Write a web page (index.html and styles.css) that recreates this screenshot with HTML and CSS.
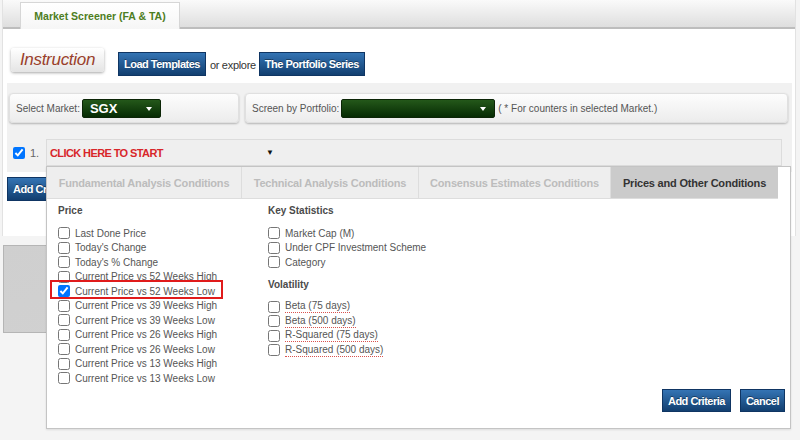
FILE: index.html
```html
<!DOCTYPE html>
<html lang="en">
<head>
    <meta charset="UTF-8">
    <meta name="viewport" content="width=device-width, initial-scale=1.0">
    <title>Market Screener</title>
    <link rel="stylesheet" href="styles.css">
</head>
<body>
    <div class="page">
        <div class="tabbar">
            <div class="page-tab">Market Screener (FA &amp; TA)</div>
        </div>

        <div class="toolbar">
            <button class="instruction-btn">Instruction</button>
            <button class="blue-btn">Load Templates</button>
            <span class="or-text">or explore</span>
            <button class="blue-btn">The Portfolio Series</button>
        </div>

        <div class="screener">
            <div class="market-row">
                <div class="filter-panel market-panel">
                    <span class="filter-label">Select Market:</span>
                    <div class="green-select market-select">SGX<span class="caret"></span></div>
                </div>
                <div class="filter-panel portfolio-panel">
                    <span class="filter-label">Screen by Portfolio:</span>
                    <div class="green-select portfolio-select"><span class="caret"></span></div>
                    <span class="filter-note">( * For counters in selected Market.)</span>
                </div>
            </div>

            <div class="criteria-row">
                <input type="checkbox" class="row-check" checked>
                <span class="row-num">1.</span>
                <div class="criteria-box">
                    <span class="start-text">CLICK HERE TO START</span>
                    <span class="down-caret">&#9660;</span>

                    <div class="dropdown">
                        <div class="cond-tabs">
                            <div class="cond-tab tab-fa">Fundamental Analysis Conditions</div>
                            <div class="cond-tab tab-ta">Technical Analysis Conditions</div>
                            <div class="cond-tab tab-ce">Consensus Estimates Conditions</div>
                            <div class="cond-tab tab-po active">Prices and Other Conditions</div>
                        </div>

                        <div class="cond-body">
                            <div class="cond-col col-price">
                                <h4>Price</h4>
                                <label class="opt"><input type="checkbox">Last Done Price</label>
                                <label class="opt"><input type="checkbox">Today's Change</label>
                                <label class="opt"><input type="checkbox">Today's % Change</label>
                                <label class="opt"><input type="checkbox">Current Price vs 52 Weeks High</label>
                                <label class="opt highlighted"><input type="checkbox" checked>Current Price vs 52 Weeks Low</label>
                                <label class="opt"><input type="checkbox">Current Price vs 39 Weeks High</label>
                                <label class="opt"><input type="checkbox">Current Price vs 39 Weeks Low</label>
                                <label class="opt"><input type="checkbox">Current Price vs 26 Weeks High</label>
                                <label class="opt"><input type="checkbox">Current Price vs 26 Weeks Low</label>
                                <label class="opt"><input type="checkbox">Current Price vs 13 Weeks High</label>
                                <label class="opt"><input type="checkbox">Current Price vs 13 Weeks Low</label>
                            </div>
                            <div class="cond-col">
                                <h4>Key Statistics</h4>
                                <label class="opt"><input type="checkbox">Market Cap (M)</label>
                                <label class="opt"><input type="checkbox">Under CPF Investment Scheme</label>
                                <label class="opt"><input type="checkbox">Category</label>
                                <h4 class="second-head">Volatility</h4>
                                <label class="opt"><input type="checkbox"><span class="dotted">Beta (75 days)</span></label>
                                <label class="opt"><input type="checkbox"><span class="dotted">Beta (500 days)</span></label>
                                <label class="opt"><input type="checkbox"><span class="dotted">R-Squared (75 days)</span></label>
                                <label class="opt"><input type="checkbox"><span class="dotted">R-Squared (500 days)</span></label>
                            </div>
                        </div>

                        <div class="cond-footer">
                            <button class="blue-btn">Add Criteria</button>
                            <button class="blue-btn">Cancel</button>
                        </div>
                    </div>
                </div>
            </div>
        </div>

        <div class="add-area">
            <button class="blue-btn">Add Criteria</button>
        </div>
    </div>

    <div class="banner"></div>
</body>
</html>
```

FILE: styles.css
```css
* {
    margin: 0;
    padding: 0;
    box-sizing: border-box;
}

body {
    font-family: 'Liberation Sans', Arial, sans-serif;
    font-size: 10px;
    color: #444;
    background: #f4f4f4;
    width: 800px;
    height: 440px;
    overflow: hidden;
}

.page {
    margin: 0 4px 0 2px;
    background: white;
    border-left: 1px solid #e2e2e2;
    border-right: 1px solid #e2e2e2;
}

/* top tab bar */
.tabbar {
    height: 29px;
    padding: 2px 0 0 17px;
    background: linear-gradient(#fafafa, #dedede);
    border-bottom: 2px solid #bdbdbd;
    display: flex;
    align-items: flex-end;
}

.page-tab {
    width: 160px;
    height: 27px;
    margin-bottom: -2px;
    display: flex;
    align-items: center;
    justify-content: center;
    background: linear-gradient(#ffffff, #f6f6f6);
    border: 1px solid #d6d6d6;
    border-bottom: none;
    color: #4d7d22;
    font-weight: bold;
    font-size: 10.5px;
    white-space: nowrap;
}

/* buttons */
.toolbar {
    display: flex;
    align-items: flex-start;
    padding: 19px 0 7px 8px;
}

button {
    font-family: inherit;
    cursor: pointer;
}

.instruction-btn {
    width: 93px;
    height: 24px;
    margin-right: 14px;
    border: none;
    border-radius: 3px;
    background: linear-gradient(#ffffff, #e4e4e4);
    box-shadow: 0 1px 3px rgba(0, 0, 0, 0.35);
    color: #9a3f2b;
    font-style: italic;
    font-size: 17px;
    letter-spacing: -0.3px;
}

.blue-btn {
    height: 24px;
    padding: 0 5px;
    border: 1px solid #0f3563;
    background: linear-gradient(#3474b4, #123f70);
    color: white;
    font-weight: bold;
    font-size: 11px;
    letter-spacing: -0.5px;
    white-space: nowrap;
    text-shadow: 0 -1px 0 rgba(0, 0, 0, 0.4);
}

.toolbar .blue-btn {
    margin-top: 4px;
}

.or-text {
    margin: 11px 3px 0 4px;
    color: #333;
    font-size: 11px;
    letter-spacing: -0.3px;
}

/* grey screener area */
.screener {
    margin: 0 3px 0 4px;
    background: #f1f1f1;
    padding: 10px 4px 6px 2px;
}

.market-row {
    display: flex;
    gap: 6px;
}

.filter-panel {
    height: 30px;
    display: flex;
    align-items: center;
    padding: 0 6px;
    border: 1px solid #e0e0e0;
    border-radius: 4px;
    background: linear-gradient(#fdfdfd, #ececec);
    box-shadow: 0 1px 2px rgba(0, 0, 0, 0.25);
}

.market-panel {
    width: 230px;
}

.portfolio-panel {
    flex: 1;
}

.filter-label {
    color: #555;
    margin-right: 2px;
}

.green-select {
    position: relative;
    height: 19px;
    border: 1px solid #0b2506;
    border-radius: 2px;
    background: linear-gradient(#24581a, #062b03);
    color: white;
    font-weight: bold;
    font-size: 13px;
    line-height: 17px;
    padding-left: 7px;
}

.market-select {
    width: 79px;
}

.portfolio-select {
    width: 154px;
    margin-right: 3px;
}

.caret {
    position: absolute;
    right: 8px;
    top: 7px;
    border-left: 3px solid transparent;
    border-right: 3px solid transparent;
    border-top: 4px solid white;
}

.filter-note {
    color: #555;
}

/* criteria row */
.criteria-row {
    display: flex;
    align-items: center;
    margin-top: 16px;
    padding-right: 6px;
}

.row-check {
    width: 12px;
    height: 12px;
    margin: 0 5px 0 4px;
}

.row-num {
    width: 16px;
    font-size: 11px;
    color: #666;
}

.criteria-box {
    position: relative;
    flex: 1;
    height: 27px;
    border: 1px solid #dcdcdc;
    background: #efefef;
    display: flex;
    align-items: center;
    padding-left: 3px;
}

.start-text {
    width: 216px;
    color: #d8262a;
    font-weight: bold;
    font-size: 11px;
    letter-spacing: -0.6px;
}

.down-caret {
    font-size: 8px;
    color: #111;
}

/* dropdown overlay */
.dropdown {
    position: absolute;
    top: 26px;
    left: -1px;
    width: 745px;
    height: 263px;
    background: white;
    border: 1px solid #c4c4c4;
    box-shadow: 0 1px 2px rgba(0, 0, 0, 0.1);
    display: flex;
    flex-direction: column;
    z-index: 5;
}

.cond-tabs {
    display: flex;
}

.cond-tab {
    height: 32px;
    display: flex;
    align-items: center;
    justify-content: center;
    background: #eeeeee;
    border-right: 1px solid #dddddd;
    border-bottom: 1px solid #dddddd;
    color: #bcbcbc;
    font-weight: bold;
    font-size: 11px;
    letter-spacing: -0.2px;
    white-space: nowrap;
}

.tab-fa { width: 195px; }
.tab-ta { width: 177px; }
.tab-ce { width: 192px; }
.tab-po { width: 167px; }

.cond-tab.active {
    background: #cbcbcb;
    color: #333;
    border-right: none;
}

.cond-body {
    flex: 1;
    display: flex;
    padding: 6px 0 0 11px;
}

.cond-col {
    display: flex;
    flex-direction: column;
}

.col-price {
    width: 210px;
}

.cond-col h4 {
    height: 13px;
    margin-bottom: 8px;
    font-size: 10px;
    font-weight: bold;
    color: #4a4a4a;
}

.cond-col .second-head {
    margin-top: 9px;
}

.opt {
    position: relative;
    height: 14.5px;
    display: flex;
    align-items: center;
    color: #555;
}

.opt input {
    width: 12px;
    height: 12px;
    margin: 0 5px 0 0;
}

.highlighted::before {
    content: '';
    position: absolute;
    left: -8px;
    top: -4px;
    width: 173px;
    height: 19px;
    box-sizing: border-box;
    border: 2px solid #e01b1b;
}

.dotted {
    border-bottom: 1px dotted #d9534f;
    line-height: 12px;
}

.cond-footer {
    display: flex;
    justify-content: flex-end;
    gap: 9px;
    padding: 0 5px 16px 0;
}

.cond-footer .blue-btn {
    height: 23px;
}

/* under the dropdown */
.add-area {
    height: 64px;
    padding: 5px 0 0 4px;
}

.banner {
    margin: 9px 0 0 3px;
    width: 787px;
    height: 88px;
    border: 1px solid #b5b5b5;
    background: linear-gradient(160deg, #cfcfcf 0%, #d3d3d3 70%, #e8e8e8 78%, #d0d0d0 86%);
}
```
